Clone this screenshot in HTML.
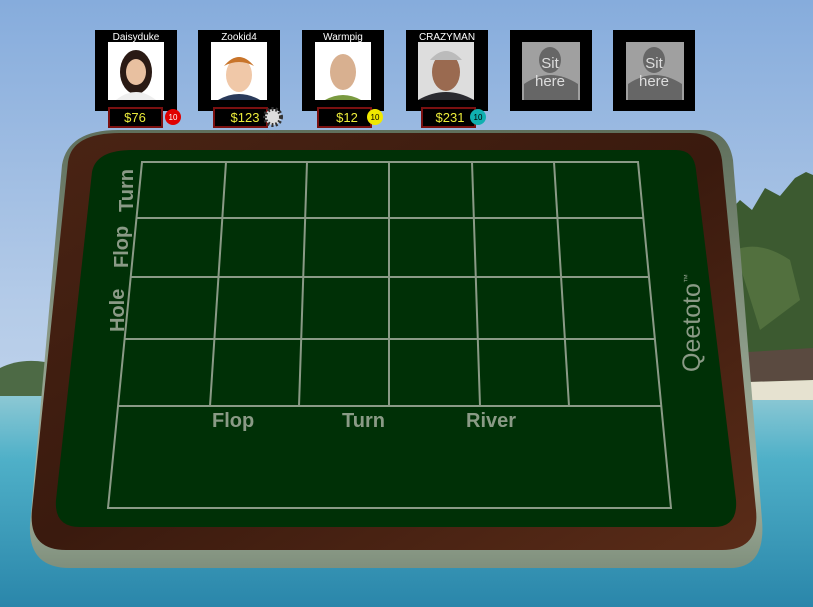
<!DOCTYPE html>
<html><head><meta charset="utf-8"><style>
html,body{margin:0;padding:0;width:813px;height:607px;overflow:hidden;font-family:"Liberation Sans",sans-serif}
</style></head><body>
<svg width="813" height="607" viewBox="0 0 813 607" xmlns="http://www.w3.org/2000/svg" font-family="Liberation Sans, sans-serif">
<defs>
<linearGradient id="sky" x1="0" y1="0" x2="0" y2="1">
<stop offset="0" stop-color="#86acdc"/><stop offset="0.5" stop-color="#b4cbe8"/><stop offset="1" stop-color="#d2e0f0"/></linearGradient>
<linearGradient id="sea" x1="0" y1="0" x2="0" y2="1">
<stop offset="0" stop-color="#8cc8d4"/><stop offset="0.3" stop-color="#4fb0c8"/><stop offset="1" stop-color="#2a86aa"/></linearGradient>
<linearGradient id="wood" x1="0" y1="0" x2="1" y2="1">
<stop offset="0" stop-color="#4a2414"/><stop offset="0.5" stop-color="#3a1a0e"/><stop offset="1" stop-color="#5a2c18"/></linearGradient>
<linearGradient id="rim" x1="0" y1="0" x2="0" y2="1">
<stop offset="0" stop-color="#5f6f5c"/><stop offset="0.8" stop-color="#a7b5a2"/><stop offset="1" stop-color="#7f8f7c"/></linearGradient>
</defs>
<rect width="813" height="607" fill="url(#sky)"/>
<rect y="396" width="813" height="211" fill="url(#sea)"/>
<path d="M0 368 Q20 358 45 362 L45 396 L0 396 Z" fill="#4d6a45"/>
<path d="M726 215 L740 200 L752 210 L765 188 L780 196 L795 178 L806 172 L813 175 L813 395 L745 395 L740 360 Z" fill="#3c5a30"/>
<path d="M735 250 Q760 240 790 260 L800 300 L760 330 Z" fill="#52703e"/>
<path d="M748 352 L813 348 L813 380 L748 382 Z" fill="#5a4a40"/>
<path d="M748 382 L813 380 L813 400 L748 400 Z" fill="#e6e2d0"/>
<!-- rim -->
<path d="M118 130 L700 130 Q728 130 733 160 L762 520 Q766 568 730 568 L70 568 Q28 568 30 525 L62 165 Q68 130 118 130 Z" fill="url(#rim)"/>
<!-- wood -->
<path d="M120 133 L690 133 Q718 133 722 160 L756 510 Q760 550 722 550 L66 550 Q28 550 32 510 L68 162 Q72 133 120 133 Z" fill="url(#wood)"/>
<!-- felt -->
<path d="M132 150 L676 150 Q694 150 696 170 L736 500 Q738 527 714 527 L80 527 Q54 527 56 500 L92 172 Q96 150 132 150 Z" fill="#003006"/>
<g stroke="#8a9a86" stroke-width="2" fill="none">
<path d="M142 162 L638 162 L671 508 L108 508 Z"/>
<path d="M137 218 L643 218 M130 277 L649 277 M124 339 L655 339 M118 406 L661 406"/>
<path d="M226 162 L210 406 M307 162 L299 406 M389 162 L389 406 M472 162 L480 406 M554 162 L569 406"/>
</g>
<g fill="#8a9a86" font-weight="bold" font-size="20">
<text x="212" y="427">Flop</text><text x="342" y="427">Turn</text><text x="466" y="427">River</text>
<text transform="translate(133,212) rotate(-90)">Turn</text>
<text transform="translate(128,268) rotate(-90)">Flop</text>
<text transform="translate(124,332) rotate(-90)">Hole</text>
<text font-weight="normal" font-size="25" transform="translate(700,372) rotate(-90)">Qeetoto<tspan font-size="9" dy="-10">™</tspan></text>
</g>
<!-- seats -->
<g>
<rect x="95" y="30" width="82" height="81" fill="#000"/><rect x="108" y="42" width="56" height="58" fill="#fff"/>
<ellipse cx="136" cy="72" rx="16" ry="22" fill="#2a1a14"/><ellipse cx="136" cy="72" rx="10" ry="13" fill="#e8c0a0"/><path d="M116 100 Q136 84 156 100Z" fill="#eee"/>
<text x="136" y="40" fill="#fff" font-size="10" text-anchor="middle">Daisyduke</text>
<rect x="109" y="108" width="53" height="19" fill="#000" stroke="#7a1010" stroke-width="2"/>
<text x="135" y="122" fill="#ecec3a" font-size="13" text-anchor="middle">$76</text>
<circle cx="173" cy="117" r="8" fill="#e00000"/><text x="173" y="120" fill="#fff" font-size="8" text-anchor="middle">10</text>

<rect x="198" y="30" width="82" height="81" fill="#000"/><rect x="211" y="42" width="56" height="58" fill="#fff"/>
<ellipse cx="239" cy="75" rx="13" ry="17" fill="#f0c8a8"/><path d="M224 66 Q239 48 254 66 Q239 58 224 66Z" fill="#c8742a"/><path d="M218 100 Q239 88 260 100Z" fill="#2a3a5a"/>
<text x="239" y="40" fill="#fff" font-size="10" text-anchor="middle">Zookid4</text>
<rect x="214" y="108" width="53" height="19" fill="#000" stroke="#7a1010" stroke-width="2"/>
<text x="245" y="122" fill="#ecec3a" font-size="13" text-anchor="middle">$123</text>
<circle cx="273" cy="117" r="8" fill="#ddd" stroke="#333" stroke-dasharray="2 2" stroke-width="4"/>

<rect x="302" y="30" width="82" height="81" fill="#000"/><rect x="315" y="42" width="56" height="58" fill="#fff"/>
<ellipse cx="343" cy="72" rx="13" ry="18" fill="#d8b090"/><path d="M325 100 Q343 90 361 100Z" fill="#7a9a40"/>
<text x="343" y="40" fill="#fff" font-size="10" text-anchor="middle">Warmpig</text>
<rect x="318" y="108" width="53" height="19" fill="#000" stroke="#7a1010" stroke-width="2"/>
<text x="347" y="122" fill="#ecec3a" font-size="13" text-anchor="middle">$12</text>
<circle cx="375" cy="117" r="8" fill="#f0e800"/><text x="375" y="120" fill="#000" font-size="8" text-anchor="middle">10</text>

<rect x="406" y="30" width="82" height="81" fill="#000"/><rect x="418" y="42" width="56" height="58" fill="#ddd"/>
<ellipse cx="446" cy="72" rx="14" ry="19" fill="#9a6a50"/><path d="M430 60 Q446 42 462 60Z" fill="#bbb"/><path d="M418 100 Q446 84 474 100Z" fill="#2a2a30"/>
<text x="447" y="40" fill="#fff" font-size="10" text-anchor="middle">CRAZYMAN</text>
<rect x="422" y="108" width="53" height="19" fill="#000" stroke="#7a1010" stroke-width="2"/>
<text x="450" y="122" fill="#ecec3a" font-size="13" text-anchor="middle">$231</text>
<circle cx="478" cy="117" r="8" fill="#10b0b0"/><text x="478" y="120" fill="#000" font-size="8" text-anchor="middle">10</text>

<rect x="510" y="30" width="82" height="81" fill="#000"/><rect x="522" y="42" width="58" height="58" fill="#a0a0a0"/>
<ellipse cx="550" cy="60" rx="11" ry="13" fill="#666"/><path d="M524 100 L524 84 Q550 66 578 84 L578 100Z" fill="#666"/>
<text x="550" y="68" fill="#ddd" font-size="15" text-anchor="middle">Sit</text><text x="550" y="86" fill="#ddd" font-size="15" text-anchor="middle">here</text>

<rect x="613" y="30" width="82" height="81" fill="#000"/><rect x="626" y="42" width="58" height="58" fill="#a0a0a0"/>
<ellipse cx="654" cy="60" rx="11" ry="13" fill="#666"/><path d="M628 100 L628 84 Q654 66 682 84 L682 100Z" fill="#666"/>
<text x="654" y="68" fill="#ddd" font-size="15" text-anchor="middle">Sit</text><text x="654" y="86" fill="#ddd" font-size="15" text-anchor="middle">here</text>
</g>
</svg>
</body></html>
